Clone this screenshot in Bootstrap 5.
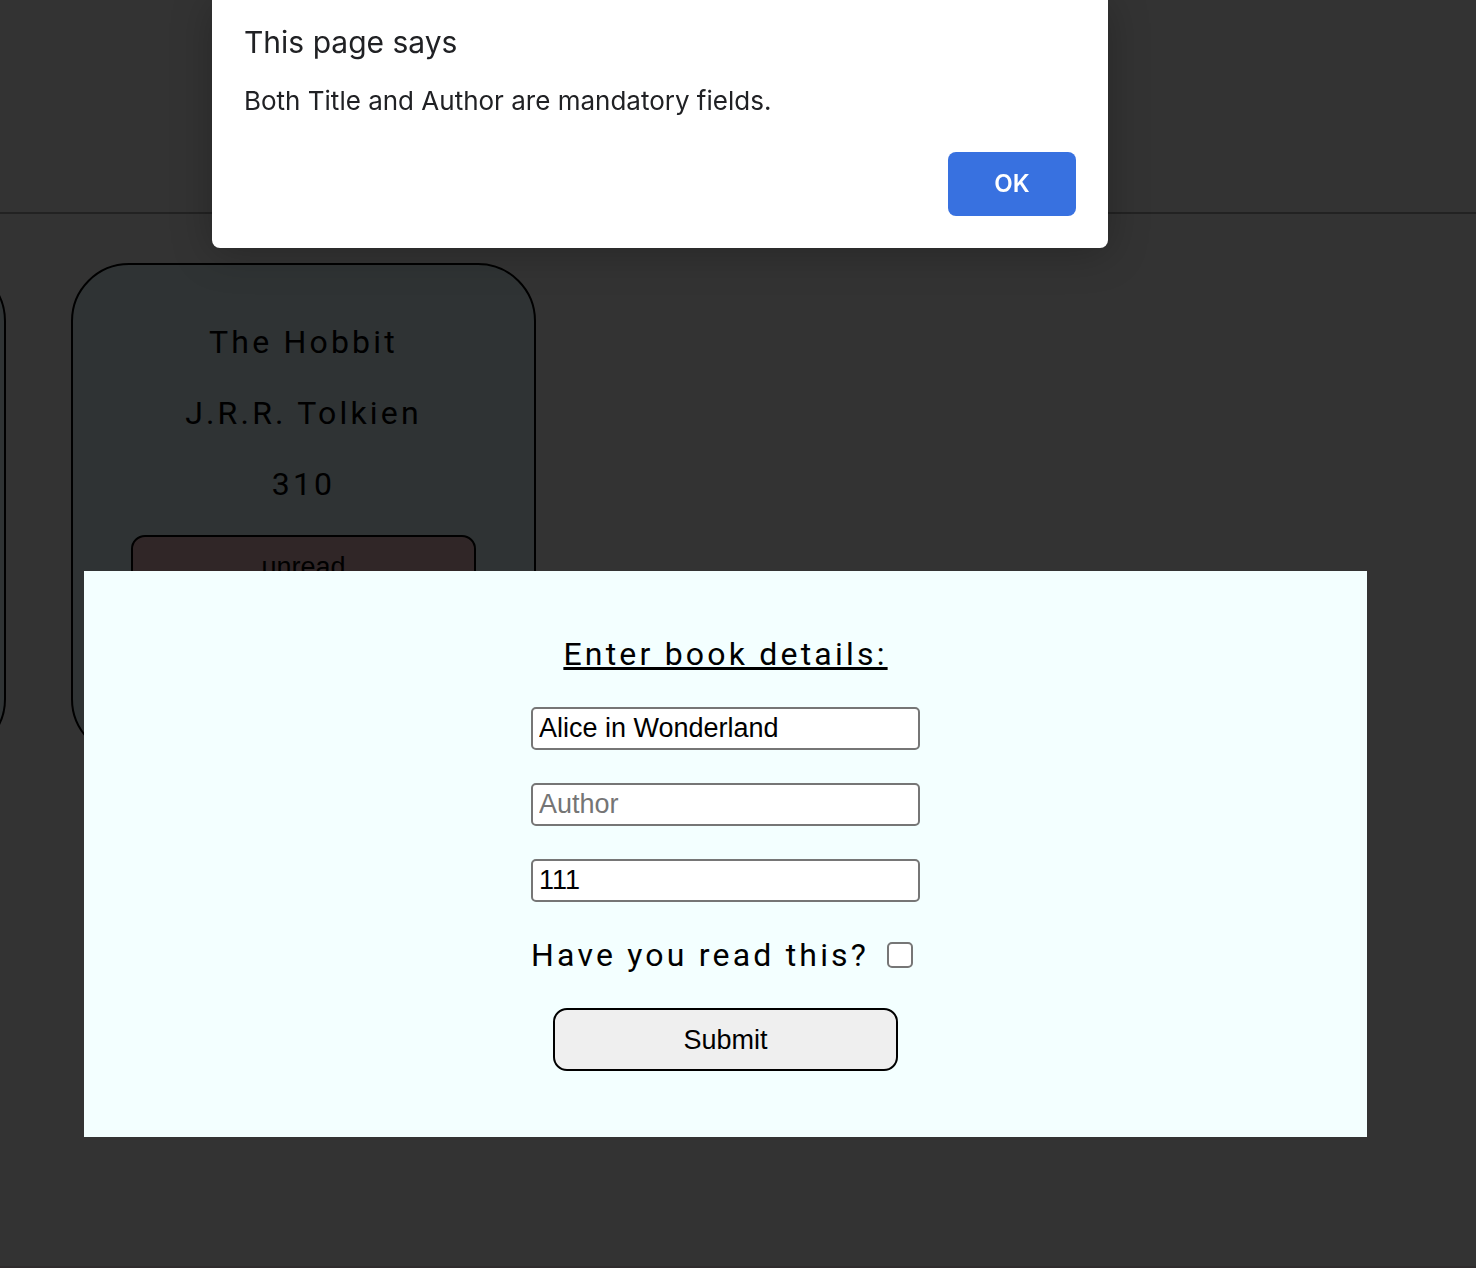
<!DOCTYPE html>
<html lang="en">
<head>
<meta charset="utf-8">
<meta name="viewport" content="width=device-width, initial-scale=1">
<title>Library</title>
<link href="https://cdn.jsdelivr.net/npm/bootstrap@5.3.0/dist/css/bootstrap.min.css" rel="stylesheet">
<style>
  body { background: #333; color: #000; font: 400 32px/41px Roboto, sans-serif; letter-spacing: 0.1em; }
  .site-head { height: 214px; border-bottom: 2px solid #222; }
  .site-foot { border-top: 2px solid #2f2c2d; }
  .shelf { width: 536px; gap: 65px; padding-top: 49px; }
  .book { width: 465px; min-height: 494px; padding: 57px 58px; gap: 30px; border: 2px solid #000; border-radius: 58px; background: #2f3334; }
  .pill { width: 345px; max-width: 100%; height: 63px; border: 2px solid #000; border-radius: 14px; color: #000; font: 400 27px/32px "Liberation Sans", Arial, sans-serif; letter-spacing: normal; }
  .pill-unread { background: #302627; }
  .pill-submit { background: #efefef; }
  .form-layer { padding: 0 109px 131px 84px; z-index: 10; }
  .book-form { padding: 64px 16px 66px; gap: 33px; background: #f3ffff; }
  .form-title { font-size: 32px; line-height: 39px; font-weight: 400; text-decoration: underline; text-decoration-thickness: 3px; }
  .field { width: 389px; max-width: 100%; height: 43px; padding: 2px 6px; border: 2px solid #767676; border-radius: 5px; background: #fff; color: #000; font: 400 27px/32px "Liberation Sans", Arial, sans-serif; letter-spacing: normal; }
  .field::placeholder { color: #757575; opacity: 1; }
  .read-row { width: 389px; max-width: 100%; line-height: 40px; gap: 18px; }
  .tick { appearance: none; width: 26px; height: 26px; border: 2px solid #767676; border-radius: 5px; background: #fff; }
  .alert-layer { padding-left: 212px; z-index: 20; }
  .page-alert { width: 896px; padding: 22px 32px 32px; border-radius: 0 0 8px 8px; background: #fff; color: #202124; font-family: Inter, sans-serif; letter-spacing: normal; box-shadow: 0 4px 40px rgba(0, 0, 0, .25); }
  .page-alert h1 { font-size: 30px; line-height: 40px; font-weight: 400; margin-bottom: 22px; }
  .page-alert p { font-size: 26px; line-height: 34px; margin-bottom: 34px; }
  .ok-btn { width: 128px; height: 64px; border: 0; border-radius: 8px; background: #3871e0; color: #fff; font-size: 24px; line-height: 32px; font-weight: 600; }
</style>
<script src="https://cdn.jsdelivr.net/npm/bootstrap@5.3.0/dist/js/bootstrap.bundle.min.js"></script>
</head>
<body class="d-flex flex-column min-vh-100">
  <header class="site-head flex-shrink-0"></header>

  <main class="flex-grow-1">
    <div class="shelf d-flex justify-content-end overflow-hidden">
      <article class="book flex-shrink-0"></article>
      <article class="book flex-shrink-0 d-flex flex-column align-items-center">
        <div>The Hobbit</div>
        <div>J.R.R. Tolkien</div>
        <div>310</div>
        <button type="button" class="pill pill-unread">unread</button>
      </article>
    </div>
  </main>

  <footer class="site-foot"></footer>

  <div class="form-layer position-fixed bottom-0 start-0 w-100">
    <form class="book-form d-flex flex-column align-items-center">
      <h2 class="form-title m-0">Enter book details:</h2>
      <input class="field" type="text" value="Alice in Wonderland" placeholder="Title" aria-label="Title">
      <input class="field" type="text" placeholder="Author" aria-label="Author">
      <input class="field" type="text" inputmode="numeric" value="111" placeholder="Pages" aria-label="Pages">
      <div class="read-row d-flex align-items-center">
        <label for="read">Have you read this?</label>
        <input class="tick" type="checkbox" id="read">
      </div>
      <button type="button" class="pill pill-submit">Submit</button>
    </form>
  </div>

  <div class="alert-layer position-fixed top-0 start-0">
    <section class="page-alert mw-100" role="alertdialog" aria-labelledby="alert-title" aria-describedby="alert-text">
      <h1 id="alert-title">This page says</h1>
      <p id="alert-text">Both Title and Author are mandatory fields.</p>
      <div class="d-flex justify-content-end">
        <button type="button" class="ok-btn">OK</button>
      </div>
    </section>
  </div>
</body>
</html>
